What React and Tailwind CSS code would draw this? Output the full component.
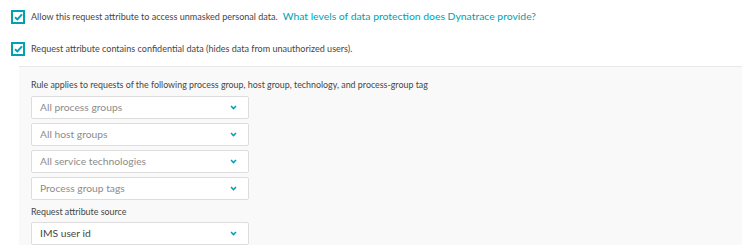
import React from "react";

const Check = () => (
  <span className="flex h-[14px] w-[14px] shrink-0 items-center justify-center border-2 border-[#00a1b2] bg-white">
    <svg width="9" height="8" viewBox="0 0 9 8">
      <path d="M1 4.2 L3.4 6.4 L8 1.4" fill="none" stroke="#00a1b2" strokeWidth="2" />
    </svg>
  </span>
);

const Select = ({ label, muted = true }) => (
  <div className="flex h-[23px] w-[218px] items-center justify-between rounded-[2px] border border-[#dddddd] bg-white pl-[8px] pr-[11px]">
    <span className={`text-[10.3px] ${muted ? "text-[#8c8c8c]" : "text-[#454646]"}`}>{label}</span>
    <svg width="7" height="5" viewBox="0 0 7 5">
      <path d="M1 1 L3.5 3.6 L6 1" fill="none" stroke="#00a1b2" strokeWidth="1.5" />
    </svg>
  </div>
);

const App = () => {
  const selects = ["All process groups", "All host groups", "All service technologies", "Process group tags"];

  return (
    <div className="h-[247px] w-[752px] overflow-hidden bg-white font-['Lato',sans-serif] text-[#454646]">
      <div className="flex h-[32px] items-center pl-[11px] pt-[1px]">
        <Check />
        <span className="ml-[6px] text-[9.05px]">Allow this request attribute to access unmasked personal data.</span>
        <span className="ml-[5px] text-[10.4px] text-[#00a1b2]">What levels of data protection does Dynatrace provide?</span>
      </div>
      <div className="flex h-[33px] items-center gap-[6px] pl-[11px]">
        <Check />
        <span className="text-[9.05px]">Request attribute contains confidential data (hides data from unauthorized users).</span>
      </div>
      <div className="ml-[19px] mr-[10px] mt-[1px] border-t border-[#e8e8e8] bg-[#f9f9f9] pl-[12px] pt-[11px]">
        <div className="mb-[5px] text-[8.9px] leading-[13px]">
          Rule applies to requests of the following process group, host group, technology, and process-group tag
        </div>
        <div className="flex flex-col gap-[4px]">
          {selects.map((s) => (
            <Select key={s} label={s} />
          ))}
        </div>
        <div className="mt-[5px] mb-[4px] text-[8.9px] leading-[13px]">Request attribute source</div>
        <Select label="IMS user id" muted={false} />
      </div>
    </div>
  );
};

export default App;
